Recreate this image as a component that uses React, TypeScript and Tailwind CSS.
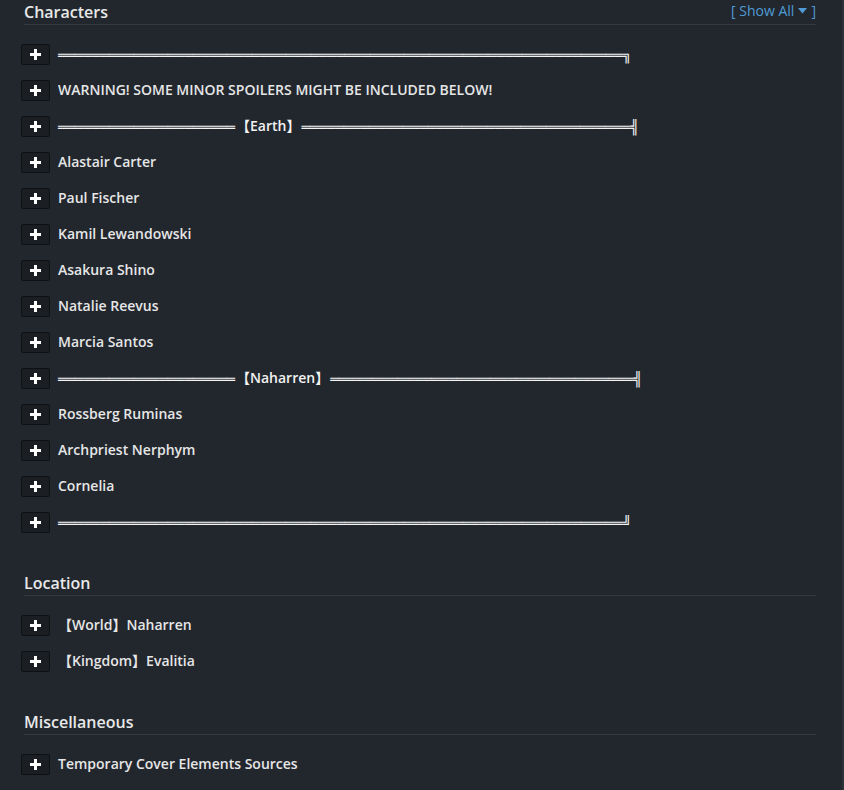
import React from "react";

const font = { fontFamily: '"Open Sans", "Noto Sans CJK JP", "DejaVu Sans", sans-serif' };

function PlusButton() {
  return (
    <div className="flex h-[21px] w-[29px] shrink-0 items-center justify-center rounded-[2px] border border-[#0e1114] bg-[#1b1f24]">
      <svg width="11" height="11" viewBox="0 0 11 11">
        <rect x="4" y="0" width="3" height="11" fill="#ffffff" />
        <rect x="0" y="4" width="11" height="3" fill="#ffffff" />
      </svg>
    </div>
  );
}

function Row({ children }: { children: React.ReactNode }) {
  return (
    <div className="flex h-9 items-center gap-2">
      <PlusButton />
      <div className="whitespace-nowrap pb-[2px] text-[14px] font-semibold text-[#e6e6e6]">{children}</div>
    </div>
  );
}

function LineRow({ children }: { children: React.ReactNode }) {
  return (
    <div className="flex h-9 items-center gap-2">
      <PlusButton />
      <div className="whitespace-nowrap pt-[1px] text-[14px] font-semibold text-[#e6e6e6]">{children}</div>
    </div>
  );
}

const box = { fontFamily: '"DejaVu Sans", sans-serif' };

function Line({ left, label, right, end }: { left: number; label?: string; right?: number; end: string }) {
  return (
    <span className="whitespace-nowrap text-[#f2f2f2]">
      <span style={box}>{"═".repeat(left)}</span>
      {label ? <span className="relative -top-[1px] mx-[1px]">【{label}】</span> : null}
      {right ? <span style={box}>{"═".repeat(right)}</span> : null}
      <span style={box}>{end}</span>
    </span>
  );
}

function Heading({ title, showAll }: { title: string; showAll?: boolean }) {
  return (
    <div className="flex h-[25px] items-start justify-between border-b border-[#343a42]">
      <div className="text-[16px] font-semibold leading-[24px] text-[#e8e8e8]">{title}</div>
      {showAll ? (
        <div className="flex items-center gap-[4px] text-[14px] leading-[22px] text-[#4f9bd5]">
          <span>[ Show All</span>
          <svg width="9" height="6" viewBox="0 0 9 6">
            <path d="M0 0 L9 0 L4.5 5.5 Z" fill="#4f9bd5" />
          </svg>
          <span>]</span>
        </div>
      ) : null}
    </div>
  );
}

export default function App() {
  return (
    <div className="min-h-[790px] w-full border-r-2 border-[#2c3138] bg-[#22272e]" style={font}>
      <div className="pl-[24px] pr-[26px]">
        <Heading title="Characters" showAll />
        <div className="-ml-[3px] mt-[11px]">
          <LineRow><Line left={67} end="╗" /></LineRow>
          <Row>WARNING! SOME MINOR SPOILERS MIGHT BE INCLUDED BELOW!</Row>
          <LineRow><Line left={21} label="Earth" right={39} end="╣" /></LineRow>
          <Row>Alastair Carter</Row>
          <Row>Paul Fischer</Row>
          <Row>Kamil Lewandowski</Row>
          <Row>Asakura Shino</Row>
          <Row>Natalie Reevus</Row>
          <Row>Marcia Santos</Row>
          <LineRow><Line left={21} label="Naharren" right={36} end="╣" /></LineRow>
          <Row>Rossberg Ruminas</Row>
          <Row>Archpriest Nerphym</Row>
          <Row>Cornelia</Row>
          <LineRow><Line left={67} end="╝" /></LineRow>
        </div>

        <div className="mt-[31px]">
          <Heading title="Location" />
        </div>
        <div className="-ml-[3px] mt-[11px]">
          <Row>【World】Naharren</Row>
          <Row>【Kingdom】Evalitia</Row>
        </div>

        <div className="mt-[31px]">
          <Heading title="Miscellaneous" />
        </div>
        <div className="-ml-[3px] mt-[11px]">
          <Row>Temporary Cover Elements Sources</Row>
        </div>
      </div>
    </div>
  );
}
